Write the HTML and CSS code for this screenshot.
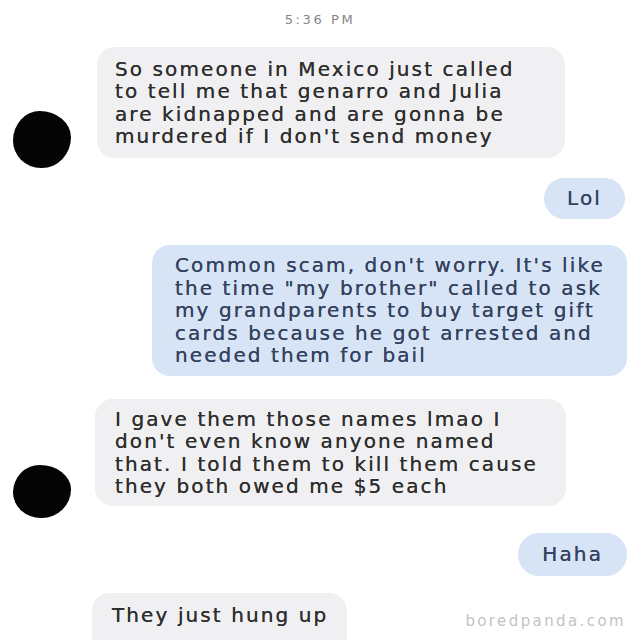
FILE: index.html
```html
<!DOCTYPE html>
<html>
<head>
<meta charset="utf-8">
<link rel="stylesheet" href="styles.css">
</head>
<body>
<div class="chat">
  <div class="time">5:36 PM</div>

  <div class="row in">
    <div class="avatar"></div>
    <div class="bubble gray b1">So someone in Mexico just called<br>to tell me that genarro and Julia<br>are kidnapped and are gonna be<br>murdered if I don't send money</div>
  </div>

  <div class="row out r-lol">
    <div class="bubble blue pill">Lol</div>
  </div>

  <div class="row out r-scam">
    <div class="bubble blue b3">Common scam, don't worry. It's like<br>the time "my brother" called to ask<br>my grandparents to buy target gift<br>cards because he got arrested and<br>needed them for bail</div>
  </div>

  <div class="row in r-names">
    <div class="avatar a2"></div>
    <div class="bubble gray b4">I gave them those names lmao I<br>don't even know anyone named<br>that. I told them to kill them cause<br>they both owed me $5 each</div>
  </div>

  <div class="row out r-haha">
    <div class="bubble blue pill">Haha</div>
  </div>

  <div class="row last">
    <div class="spacer"></div>
    <div class="bubble gray b6">They just hung up</div>
    <div class="mark">boredpanda.com</div>
  </div>
</div>
</body>
</html>
```

FILE: styles.css
```css
html, body {
  margin: 0;
  padding: 0;
  background: #ffffff;
  height: 640px;
  overflow: hidden;
}

.chat {
  display: flex;
  flex-direction: column;
  padding: 10px 13px 0 13px;
  font-family: "DejaVu Sans", "Liberation Sans", sans-serif;
}

.time {
  text-align: center;
  font-size: 13px;
  line-height: 20px;
  letter-spacing: 2.6px;
  color: #858585;
}

.row {
  display: flex;
  align-items: flex-end;
}

.row.in {
  gap: 24px;
  margin-top: 17px;
}

.row.out {
  justify-content: flex-end;
}

.avatar {
  width: 58px;
  height: 57px;
  flex: none;
  background: #050505;
  border-radius: 46% 54% 50% 48% / 52% 46% 54% 48%;
  margin-bottom: -10px;
}

.avatar.a2 {
  height: 53px;
  margin-bottom: -12px;
}

.bubble {
  box-sizing: border-box;
  font-size: 20px;
  line-height: 22.5px;
  letter-spacing: 2.1px;
  white-space: nowrap;
  border-radius: 18px;
}

.gray {
  background: #f0f0f2;
  color: #2f2f2f;
  text-shadow: 0 0 0.4px #2f2f2f;
}

.blue {
  background: #d7e4f6;
  color: #34425f;
  text-shadow: 0 0 0.4px #34425f;
}

.b1 {
  width: 468px;
  padding: 10.5px 18px;
  margin-left: 2px;
}

.pill {
  border-radius: 21px;
  padding: 9px 23px;
  line-height: 22.5px;
}

.r-lol {
  margin-top: 20px;
  margin-right: 2px;
}

.r-scam {
  margin-top: 26px;
}

.b3 {
  width: 475px;
  padding: 9.5px 20px 9.5px 23px;
}

.row.r-names {
  margin-top: 23px;
}

.b4 {
  width: 471px;
  padding: 8.5px 20px;
}

.r-haha {
  margin-top: 27px;
}

.r-haha .pill {
  padding: 10px 24px;
}

.row.last {
  margin-top: 17px;
  align-items: flex-start;
  gap: 0;
}

.spacer {
  width: 79px;
  flex: none;
}

.b6 {
  width: 255px;
  padding: 11px 20px 20px 20px;
  border-radius: 18px 18px 0 0;
}

.mark {
  margin-left: auto;
  margin-top: 18px;
  margin-right: 1px;
  font-size: 15px;
  line-height: 20px;
  letter-spacing: 2.4px;
  color: #c3c3c3;
}
```
